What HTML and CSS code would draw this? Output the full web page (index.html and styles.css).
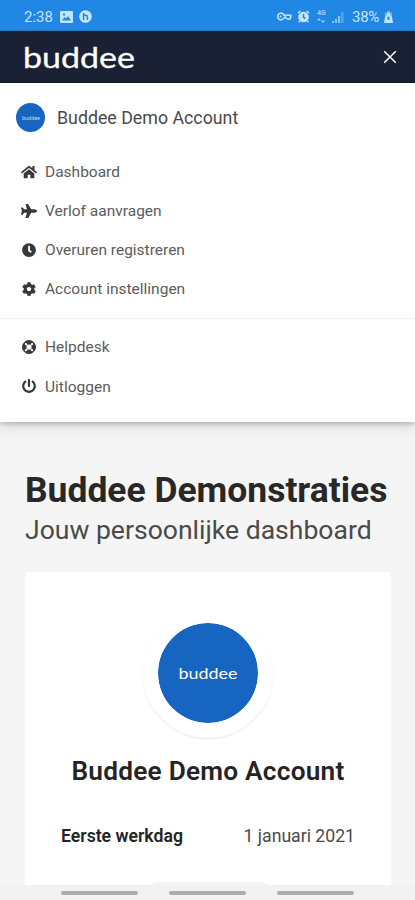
FILE: index.html
```html
<!DOCTYPE html>
<html lang="nl">
<head>
<meta charset="utf-8">
<meta name="viewport" content="width=device-width, initial-scale=1">
<title>Buddee</title>
<link rel="stylesheet" href="styles.css">
</head>
<body>
<div class="phone">
  <div class="status">
    <span class="time">2:38</span>
    <svg class="s-image" viewBox="0 0 13 12"><path fill-rule="evenodd" d="M1 0h11q1 0 1 1v10q0 1-1 1H1q-1 0-1-1V1q0-1 1-1zM2 9.500h9L8 5 6 7.600 4.500 6z M3 2.500v2h2v-2z"/></svg>
    <svg class="s-app" viewBox="0 0 13 13"><circle cx="6.500" cy="6.500" r="6.300"/><path class="cut" d="M4.600 3v7M4.600 6.500q0-1.300 1.900-1.300t1.900 1.300V10"/></svg>
    <span class="fill"></span>
    <svg class="s-key" viewBox="0 0 16 9"><path class="line" d="M8 3.200A3.300 3.300 0 1 0 8 5.800l1.500-.8q1 2.500 3 2.300 2.500-.3 2.300-4.100z"/><circle cx="4.600" cy="4.500" r="1"/></svg>
    <svg class="s-alarm" viewBox="0 0 13 13"><circle cx="6.500" cy="7" r="5.300"/><path class="line" d="M1 3l2.500-2M12 3L9.500 1M2.700 11l-1 1.300M10.300 11l1 1.300"/><path class="cut" d="M6.500 4v3.300l2 1.200"/></svg>
    <span class="net"><b>4G</b><svg viewBox="0 0 8 5"><path d="M0 2.500L2 0l2 2.500zM4 2.500h4L6 5z"/></svg></span>
    <svg class="s-signal" viewBox="0 0 12 12"><path d="M0 10h2v2H0zM3 8h2v4H3zM6 5h2v7H6z"/><path class="dim" d="M9 1h2.500v11H9z"/></svg>
    <span class="percent">38%</span>
    <svg class="s-battery" viewBox="0 0 9 12"><path class="dim" d="M3 0h3v1.500h2V6H1V1.500h2z"/><path d="M1 6l2-2V2h3v2l2 2 1 6H0z"/><path class="cut" d="M4.500 5.500v3.500M3.300 7.500h2.400"/></svg>
  </div>
  <header class="header">
    <svg class="logo" viewBox="0 0 116 44"><text x="0" y="30.500" textLength="112" lengthAdjust="spacingAndGlyphs">buddee</text></svg>
    <svg class="close" viewBox="0 0 14 14"><path d="M1.200 1.200l11.600 11.600M12.800 1.200L1.200 12.800"/></svg>
  </header>
  <nav class="menu">
    <div class="user">
      <span class="avatar"><svg viewBox="0 0 20 10"><text x="1" y="6.500" textLength="18" lengthAdjust="spacingAndGlyphs">buddee</text></svg></span>
      <span class="username">Buddee Demo Account</span>
    </div>
    <a class="item"><svg viewBox="0 0 576 512"><path d="M288 150L96 308v156q0 16 16 16h112q16 0 16-16V350h96v114q0 16 16 16h112q16 0 16-16V308z"/><path d="M571 251l-83-68V45q0-12-12-12h-56q-12 0-12 12v72l-90-74q-30-23-60 0L5 251q-9 8-2 17l26 31q8 9 17 2L280 108q8-6 16 0l234 193q9 7 17-2l26-31q7-9-2-17z"/></svg><span>Dashboard</span></a>
    <a class="item"><svg viewBox="0 0 576 512"><path d="M480 192H365.710L260.610 8.060A16 16 0 0 0 246.710 0h-65.500c-10.630 0-18.300 10.170-15.380 20.390L214.860 192H112l-43.200-57.600c-3-4-7.800-6.400-12.800-6.400H16C5.600 128-2 137.800.5 147.900L32 256 .5 364.100C-2 374.200 5.600 384 16 384h40c5 0 9.800-2.400 12.800-6.400L112 320h102.900l-49 171.600c-3 10.200 4.700 20.400 15.300 20.400h65.500c5.800 0 11-3 13.900-8L365.700 320H480c35.400 0 96-28.600 96-64s-60.600-64-96-64z"/></svg><span>Verlof aanvragen</span></a>
    <a class="item"><svg viewBox="-32 0 576 512"><path d="M256 8C119 8 8 119 8 256s111 248 248 248 248-111 248-248S393 8 256 8zm92.500 313l-20 25a16 16 0 0 1-22.500 2.500l-67-49.700a40 40 0 0 1-15-31.200V112a16 16 0 0 1 16-16h32a16 16 0 0 1 16 16v144l58 42.500a16 16 0 0 1 2.500 22.500z"/></svg><span>Overuren registreren</span></a>
    <a class="item"><svg viewBox="-32 0 576 512"><path d="M487.400 315.700l-42.600-24.600c4.300-23.200 4.300-47 0-70.200l42.600-24.600c4.900-2.800 7.100-8.600 5.500-14-11.100-35.600-30-67.800-54.700-94.600-3.800-4.100-10-5.100-14.800-2.300L380.800 110c-17.900-15.400-38.500-27.300-60.800-35.100V25.800c0-5.600-3.900-10.500-9.400-11.700-36.700-8.200-74.300-7.800-109.200 0-5.500 1.200-9.400 6.100-9.400 11.700V75c-22.200 7.900-42.800 19.800-60.800 35.100L88.700 85.500c-4.900-2.800-11-1.900-14.800 2.300-24.700 26.700-43.600 58.900-54.700 94.600-1.700 5.400.6 11.200 5.500 14L67.300 221c-4.300 23.200-4.300 47 0 70.200l-42.600 24.600c-4.900 2.800-7.100 8.600-5.500 14 11.100 35.600 30 67.800 54.700 94.600 3.800 4.100 10 5.100 14.800 2.300l42.600-24.600c17.900 15.400 38.500 27.300 60.800 35.100v49.200c0 5.600 3.900 10.500 9.400 11.700 36.700 8.200 74.300 7.800 109.200 0 5.500-1.200 9.400-6.100 9.400-11.700v-49.200c22.200-7.900 42.800-19.800 60.800-35.100l42.600 24.600c4.900 2.800 11 1.900 14.800-2.300 24.700-26.700 43.600-58.900 54.700-94.600 1.500-5.500-.7-11.300-5.600-14.100zM256 336c-44.100 0-80-35.900-80-80s35.900-80 80-80 80 35.900 80 80-35.900 80-80 80z"/></svg><span>Account instellingen</span></a>
    <div class="divider"></div>
    <a class="item"><svg viewBox="-32 0 576 512"><circle class="ring" cx="256" cy="256" r="168"/><circle class="rim" cx="256" cy="256" r="232"/><path class="gap" d="M120 120l60 60M392 120l-60 60M120 392l60-60M392 392l-60-60"/></svg><span>Helpdesk</span></a>
    <a class="item"><svg viewBox="-32 0 576 512"><path d="M400 54.100c63 45 104 118.600 104 201.900 0 136.800-110.800 247.700-247.500 248C120 504.300 8.200 393 8 256.400 7.900 173.100 48.900 99.300 111.800 54.200c11.700-8.300 28-4.800 35 7.700L162.600 90c5.900 10.500 3.100 23.800-6.600 31-41.500 30.800-68 79.600-68 134.900-.1 92.300 74.500 168.100 168 168.100 91.600 0 168.600-74.200 168-169.100-.3-51.800-24.700-101.800-68.100-134-9.700-7.200-12.400-20.500-6.500-30.900l15.800-28.100c7-12.400 23.200-16.100 34.800-7.800zM296 264V24c0-13.300-10.700-24-24-24h-32c-13.300 0-24 10.700-24 24v240c0 13.300 10.700 24 24 24h32c13.300 0 24-10.700 24-24z"/></svg><span>Uitloggen</span></a>
  </nav>
  <main class="content">
    <h1>Buddee Demonstraties</h1>
    <p class="subtitle">Jouw persoonlijke dashboard</p>
    <section class="card">
      <div class="portrait"><svg viewBox="0 0 64 26"><text x="2.500" y="18.500" textLength="59" lengthAdjust="spacingAndGlyphs">buddee</text></svg></div>
      <h2>Buddee Demo Account</h2>
      <div class="row"><strong>Eerste werkdag</strong><span>1 januari 2021</span></div>
    </section>
  </main>
  <footer class="navbar"><i></i><i></i><i></i></footer>
</div>
</body>
</html>
```
FILE: styles.css
```css
* { box-sizing: border-box; }
body { margin: 0; font-family: Roboto, sans-serif; color: #4a4a4a; background: #f5f5f5; }
.phone { width: 415px; height: 900px; display: flex; flex-direction: column; overflow: hidden; }
svg { display: block; flex: none; }

.status { height: 31px; flex: none; background: #2187e4; color: #c4e5ff; display: flex; align-items: center; padding: 3px 22px 0 24px; font-size: 15px; border-bottom: 1px solid #2479c6; }
.status svg { fill: #c4e5ff; }
.status .cut { fill: none; stroke: #2187e4; stroke-width: 1.5; }
.status .line { fill: none; stroke: #c4e5ff; stroke-width: 1.6; }
.status .dim { opacity: .5; }
.time { width: 36px; }
.s-image { width: 13px; height: 12px; }
.s-app { width: 13px; height: 13px; margin-left: 6px; }
.fill { flex: 1; }
.s-key { width: 16px; height: 9px; }
.s-alarm { width: 13px; height: 13px; margin-left: 5px; }
.net { width: 9px; margin-left: 7px; font-size: 7px; line-height: 7px; opacity: .75; }
.net svg { width: 8px; height: 5px; margin-top: 1px; }
.s-signal { width: 12px; height: 12px; margin-left: 6px; opacity: .65; }
.percent { margin-left: 8px; width: 32px; letter-spacing: -.3px; }
.s-battery { width: 9px; height: 12px; }

.header { height: 52px; flex: none; background: #1a2135; display: flex; align-items: center; justify-content: space-between; padding: 0 18px 0 23px; border-bottom: 1px solid #11162a; }
.logo { width: 116px; height: 44px; margin-top: 5px; }
.logo text, .avatar text, .portrait text { font-family: Lato, sans-serif; fill: #fff; }
.logo text { font-size: 29.500px; stroke: #fff; stroke-width: .3; stroke-linejoin: round; }
.close { width: 14px; height: 14px; fill: none; stroke: #fff; stroke-width: 1.5; }

.menu { height: 339px; flex: none; background: #fff; padding-top: 14px; box-shadow: 0 2px 5px rgba(0, 0, 0, .22), 0 5px 16px rgba(0, 0, 0, .1); }
.user { height: 41px; display: flex; align-items: center; padding-left: 16px; margin-bottom: 14px; }
.avatar { width: 29px; height: 29px; border-radius: 50%; background: #1665c0; display: flex; align-items: center; justify-content: center; margin-right: 12px; }
.avatar svg { width: 20px; height: 10px; opacity: .75; }
.avatar text { font-size: 5px; }
.username { font-size: 17.800px; }
.item { height: 39.200px; display: flex; align-items: center; padding-left: 20.500px; font-size: 15.500px; color: #5c5c5c; }
.item svg { width: 16px; height: 14.200px; margin-right: 8.500px; fill: #383838; }
.item .ring { fill: none; stroke: #383838; stroke-width: 150; }
.item .rim { fill: none; stroke: #383838; stroke-width: 32; }
.item .gap { stroke: #fff; stroke-width: 70; }
.divider { height: 1px; background: #f0f0f0; margin: 9px 0; }

.content { flex: 1; padding: 47px 24px 0 25px; min-height: 0; }
h1 { margin: 0; font-size: 35.450px; line-height: 43px; font-weight: 700; color: #282828; white-space: nowrap; }
.subtitle { margin: 1px 0 0; font-size: 26.550px; line-height: 34px; white-space: nowrap; }
.card { background: #fff; height: 313px; margin-top: 25px; border-radius: 2px 2px 0 0; padding: 36px 36px 0; display: flex; flex-direction: column; align-items: center; }
.portrait { width: 130px; height: 130px; border: 15px solid #fff; border-radius: 50%; background: #1665c0; background-clip: padding-box; display: flex; align-items: center; justify-content: center; box-shadow: 0 1px 2px rgba(0, 0, 0, .1); }
.portrait svg { width: 64px; height: 26px; }
.portrait text { font-size: 16px; }
h2 { margin: 17px 0 0; font-size: 26.200px; line-height: 32px; font-weight: 600; letter-spacing: .25px; color: #242424; white-space: nowrap; }
.row { align-self: stretch; display: flex; justify-content: space-between; margin-top: 37px; font-size: 17.650px; line-height: 24px; white-space: nowrap; }
.row strong { font-weight: 600; color: #242424; }

.navbar { position: relative; height: 15px; flex: none; background: #f2f2f2; display: flex; justify-content: center; gap: 31px; padding-top: 6px; }
.navbar::before { content: ""; position: absolute; left: 149px; top: -3px; width: 120px; height: 4px; border-radius: 12px 12px 0 0 / 4px 4px 0 0; background: #f4f4f4; }
.navbar i { width: 77px; height: 4px; border-radius: 2px; background: #adadad; }
```
